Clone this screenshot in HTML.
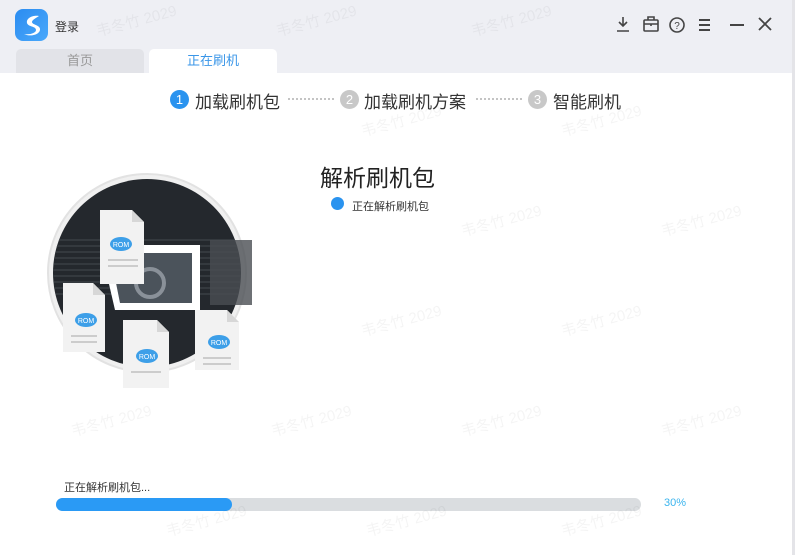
<!DOCTYPE html>
<html><head><meta charset="utf-8"><style>
*{margin:0;padding:0;box-sizing:border-box}
body{width:795px;height:555px;overflow:hidden;background:#fff;font-family:"Liberation Sans","Noto Sans CJK SC",sans-serif;position:relative}
.hdr{position:absolute;left:0;top:0;width:792px;height:73px;background:#eeeff4}
.edge{position:absolute;left:792px;top:0;width:3px;height:555px;background:#e4e4e8}
.abs{position:absolute}
.wm{position:absolute;color:rgba(0,0,0,0.045);font-size:15px;transform:rotate(-15deg);white-space:nowrap}
</style></head><body>
<div class="hdr"></div>
<div class="edge"></div>
<div class="abs" style="left:15px;top:9px;width:33px;height:32px;border-radius:8px;background:linear-gradient(135deg,#2b8cf0,#4aa8fb)"></div>
<svg class="abs" style="left:15px;top:9px" width="33" height="32" viewBox="0 0 33 32"><path d="M24 7C18 6 11 9 12 14c1 4 9 3 9 7 0 3-6 5-12 4 6 3 15 1 16-4 1-5-8-5-8-8 0-2 4-4 7-6z" fill="#fff"/></svg>
<div class="abs" style="left:55px;top:18px;font-size:12px;color:#333">登录</div>
<div class="abs" style="left:16px;top:49px;width:128px;height:24px;background:#e2e3e8;border-radius:5px 5px 0 0;text-align:center;font-size:13px;line-height:24px;color:#999">首页</div>
<div class="abs" style="left:149px;top:49px;width:128px;height:24px;background:#fff;border-radius:5px 5px 0 0;text-align:center;font-size:13px;line-height:24px;color:#3a96e8">正在刷机</div>
<svg class="abs" style="left:610px;top:14px" width="170" height="24" viewBox="0 0 170 24" fill="none" stroke="#444" stroke-width="1.6">
<path d="M13 3v9M9 8l4 4 4-4M7 17h12"/>
<rect x="34" y="6" width="14" height="11" rx="1"/><path d="M38 6V3h6v3M34 10h14M41 10v2"/>
<circle cx="67" cy="11" r="7"/><text x="67" y="15" font-size="10" text-anchor="middle" fill="#444" stroke="none" font-family="Liberation Sans">?</text>
<path d="M89 6h11M89 11h11M89 16h11" stroke-width="2"/>
<path d="M120 11h14" stroke-width="2"/>
<path d="M149 4l12 12M161 4l-12 12" stroke-width="1.8"/>
</svg>
<div class="abs" style="left:170px;top:90px;width:19px;height:19px;border-radius:50%;background:#2a93ef;color:#fff;font-size:13px;text-align:center;line-height:19px">1</div>
<div class="abs" style="left:195px;top:88px;font-size:17px;color:#333">加载刷机包</div>
<div class="abs" style="left:288px;top:98px;width:46px;border-top:2px dotted #c4c4c4"></div>
<div class="abs" style="left:340px;top:90px;width:19px;height:19px;border-radius:50%;background:#c8c8c8;color:#fff;font-size:13px;text-align:center;line-height:19px">2</div>
<div class="abs" style="left:364px;top:88px;font-size:17px;color:#333">加载刷机方案</div>
<div class="abs" style="left:476px;top:98px;width:46px;border-top:2px dotted #c4c4c4"></div>
<div class="abs" style="left:528px;top:90px;width:19px;height:19px;border-radius:50%;background:#c8c8c8;color:#fff;font-size:13px;text-align:center;line-height:19px">3</div>
<div class="abs" style="left:553px;top:88px;font-size:17px;color:#333">智能刷机</div>
<div class="abs" style="left:320px;top:159px;font-size:23px;color:#222">解析刷机包</div>
<div class="abs" style="left:331px;top:197px;width:13px;height:13px;border-radius:50%;background:#2a93ef"></div>
<div class="abs" style="left:352px;top:198px;font-size:11px;color:#333">正在解析刷机包</div>
<svg class="abs" style="left:45px;top:170px" width="220" height="220" viewBox="0 0 220 220">
<defs><clipPath id="c"><circle cx="102" cy="103" r="94"/></clipPath></defs>
<circle cx="102" cy="103" r="99" fill="#f0f0f0" stroke="#e2e2e2" stroke-width="2"/>
<circle cx="102" cy="103" r="94" fill="#24282d"/>
<g clip-path="url(#c)" stroke="#3a3f45" stroke-width="1.5">
<path d="M0 70h210M0 76h210M0 82h210M0 88h210M0 94h210M0 100h210M0 106h210M0 112h210M0 118h210M0 124h210"/>
</g>
<path d="M55 75h100v65H70z" fill="#fff"/>
<path d="M65 83h82v50H75z" fill="#4b535b"/>
<path d="M165 70h42v65h-42z" fill="#4a4d52" opacity="0.8"/>
<circle cx="105" cy="113" r="14" fill="none" stroke="#8a9199" stroke-width="4"/>
<g fill="#f2f2f2"><path d="M55 40h32l12 12v62H55z"/><path d="M18 113h30l12 12v57H18z"/><path d="M78 150h34l12 12v56H78z"/><path d="M150 140h32l12 12v48h-44z"/></g>
<g fill="#d7d7d7"><path d="M87 40v12h12z"/><path d="M48 113v12h12z"/><path d="M112 150v12h12z"/><path d="M182 140v12h12z"/></g>
<g fill="#3d9fe8"><ellipse cx="76" cy="74" rx="11" ry="7"/><ellipse cx="41" cy="150" rx="11" ry="7"/><ellipse cx="102" cy="186" rx="11" ry="7"/><ellipse cx="174" cy="172" rx="11" ry="7"/></g>
<g fill="#fff" font-size="7" font-family="Liberation Sans" text-anchor="middle"><text x="76" y="77">ROM</text><text x="41" y="153">ROM</text><text x="102" y="189">ROM</text><text x="174" y="175">ROM</text></g>
<g stroke="#ccc" stroke-width="2"><path d="M63 90h30M63 96h30M26 166h26M26 172h26M86 202h30M158 188h28M158 194h28"/></g>
</svg>
<div class="abs" style="left:64px;top:479px;font-size:11px;color:#333">正在解析刷机包...</div>
<div class="abs" style="left:56px;top:498px;width:585px;height:13px;border-radius:7px;background:#dadde0"></div>
<div class="abs" style="left:56px;top:498px;width:176px;height:13px;border-radius:7px;background:#2a9af5"></div>
<div class="abs" style="left:664px;top:497px;font-size:11px;color:#3ab4ee">30%</div>
<div class="wm" style="left:95px;top:10px">韦冬竹 2029</div>
<div class="wm" style="left:275px;top:10px">韦冬竹 2029</div>
<div class="wm" style="left:470px;top:10px">韦冬竹 2029</div>
<div class="wm" style="left:360px;top:110px">韦冬竹 2029</div>
<div class="wm" style="left:560px;top:110px">韦冬竹 2029</div>
<div class="wm" style="left:460px;top:210px">韦冬竹 2029</div>
<div class="wm" style="left:660px;top:210px">韦冬竹 2029</div>
<div class="wm" style="left:360px;top:310px">韦冬竹 2029</div>
<div class="wm" style="left:560px;top:310px">韦冬竹 2029</div>
<div class="wm" style="left:70px;top:410px">韦冬竹 2029</div>
<div class="wm" style="left:270px;top:410px">韦冬竹 2029</div>
<div class="wm" style="left:460px;top:410px">韦冬竹 2029</div>
<div class="wm" style="left:660px;top:410px">韦冬竹 2029</div>
<div class="wm" style="left:165px;top:510px">韦冬竹 2029</div>
<div class="wm" style="left:365px;top:510px">韦冬竹 2029</div>
<div class="wm" style="left:560px;top:510px">韦冬竹 2029</div>
</body></html>
